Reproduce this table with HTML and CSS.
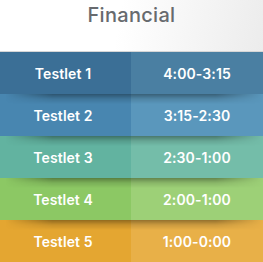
FILE: index.html
```html
<!DOCTYPE html>
<html>
<head>
<meta charset="utf-8">
<link rel="stylesheet" href="styles.css">
</head>
<body>
<div class="card">
  <div class="header">Financial</div>
  <div class="row r1"><div class="cell left">Testlet 1</div><div class="cell right">4:00-3:15</div></div>
  <div class="row r2"><div class="cell left">Testlet 2</div><div class="cell right">3:15-2:30</div></div>
  <div class="row r3"><div class="cell left">Testlet 3</div><div class="cell right">2:30-1:00</div></div>
  <div class="row r4"><div class="cell left">Testlet 4</div><div class="cell right">2:00-1:00</div></div>
  <div class="row r5"><div class="cell left">Testlet 5</div><div class="cell right">1:00-0:00</div></div>
</div>
</body>
</html>
```
FILE: styles.css
```css
html, body { margin: 0; padding: 0; }
body { width: 263px; height: 262px; overflow: hidden; font-family: Inter, "DejaVu Sans", sans-serif; }
.card { display: flex; flex-direction: column; width: 263px; }
.header {
  height: 51px;
  border-bottom: 1px solid #d6d6d6;
  background: linear-gradient(100deg, #ffffff 0%, #ffffff 45%, #ececec 100%);
  color: #676a6e;
  font-size: 20px;
  font-weight: 500;
  text-align: center;
  line-height: 30px;
  letter-spacing: 0.3px;
}
.row { position: relative; display: flex; height: 42px; }
.row::before {
  content: "";
  position: absolute;
  left: 0; right: 0; top: 0;
  height: 10px;
  background: linear-gradient(to bottom, rgba(0,0,0,0.36), rgba(0,0,0,0.12) 50%, rgba(0,0,0,0));
  -webkit-mask-image: linear-gradient(to right, transparent 2%, #000 20%, #000 82%, transparent 100%);
  mask-image: linear-gradient(to right, transparent 2%, #000 20%, #000 82%, transparent 100%);
}
.row.r1::before { display: none; }
.cell {
  display: flex; align-items: center; justify-content: center;
  color: #ffffff; font-size: 14px; font-weight: 600; letter-spacing: 0.1px;
}
.left { width: 131px; padding-right: 5px; box-sizing: border-box; }
.right { flex: 1; }
.r1 .left { background: #3b6f96; } .r1 .right { background: #4a7fa2; }
.r2 .left { background: #4886b0; } .r2 .right { background: #5a97bc; }
.r3 .left { background: #62b3a0; } .r3 .right { background: #74bda9; }
.r4 .left { background: #8cc864; } .r4 .right { background: #9dd077; }
.r5 .left { background: #e4a631; } .r5 .right { background: #e8b048; }
```
